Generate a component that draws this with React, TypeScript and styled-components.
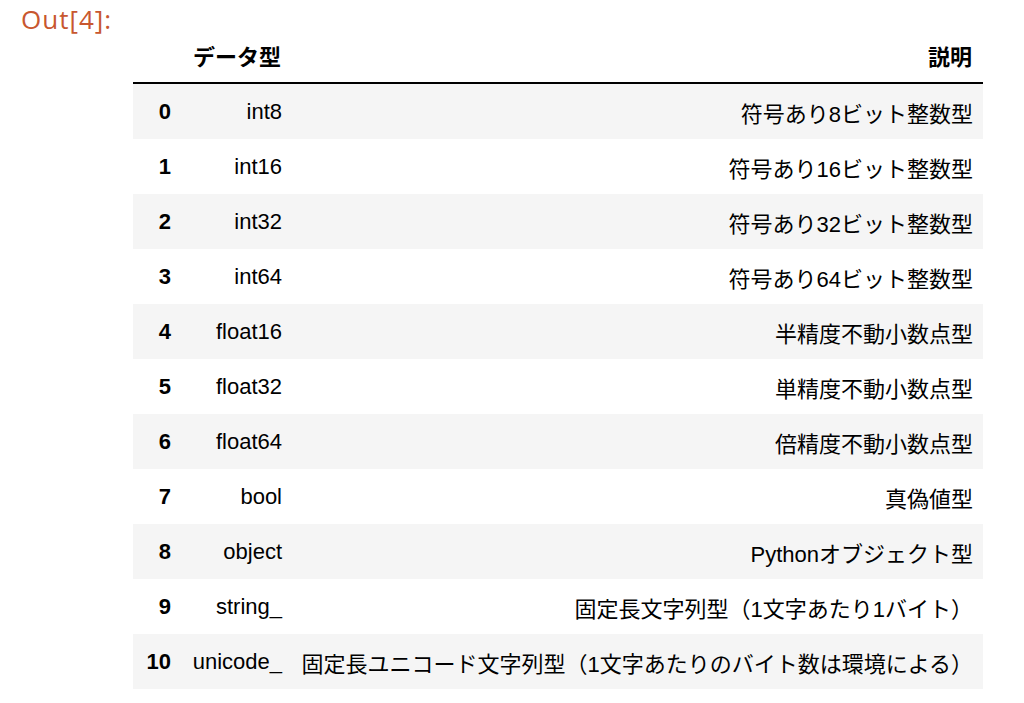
import styled, { createGlobalStyle } from "styled-components";

const GlobalStyle = createGlobalStyle`
  body {
    margin: 0;
    background: #ffffff;
    font-family: "Liberation Sans", "Noto Sans CJK JP", sans-serif;
    color: #000000;
  }
`;

const OutputCell = styled.div`
  display: flex;
  align-items: flex-start;
  padding-top: 2px;
`;

const Prompt = styled.div`
  width: 133px;
  box-sizing: border-box;
  padding-left: 21px;
  font-family: "Open Sans", "Liberation Sans", sans-serif;
  font-size: 26px;
  line-height: 34px;
  letter-spacing: 1px;
  color: #c8572f;
`;

const Table = styled.table`
  margin-top: 27px;
  width: 850px;
  table-layout: fixed;
  border-collapse: collapse;
  border-spacing: 0;
  font-size: 22px;
`;

const HeadCell = styled.th`
  height: 51px;
  padding: 0 11px 2px;
  text-align: right;
  vertical-align: middle;
  font-weight: bold;
  border-bottom: 2px solid #000000;
`;

const Row = styled.tr<{ $striped: boolean }>`
  background: ${(p) => (p.$striped ? "#f5f5f5" : "#ffffff")};
`;

const IndexCell = styled.th`
  height: 55px;
  padding: 0 11px 0 0;
  text-align: right;
  font-weight: bold;
  vertical-align: middle;
`;

const Cell = styled.td`
  height: 55px;
  padding: 0 10px 0 0;
  text-align: right;
  vertical-align: middle;
  white-space: nowrap;
`;

const rows: [string, string][] = [
  ["int8", "符号あり8ビット整数型"],
  ["int16", "符号あり16ビット整数型"],
  ["int32", "符号あり32ビット整数型"],
  ["int64", "符号あり64ビット整数型"],
  ["float16", "半精度不動小数点型"],
  ["float32", "単精度不動小数点型"],
  ["float64", "倍精度不動小数点型"],
  ["bool", "真偽値型"],
  ["object", "Pythonオブジェクト型"],
  ["string_", "固定長文字列型（1文字あたり1バイト）"],
  ["unicode_", "固定長ユニコード文字列型（1文字あたりのバイト数は環境による）"],
];

export default function App() {
  return (
    <>
      <GlobalStyle />
      <OutputCell>
        <Prompt>Out[4]:</Prompt>
        <Table>
          <colgroup>
            <col style={{ width: 49 }} />
            <col style={{ width: 110 }} />
            <col />
          </colgroup>
          <thead>
            <tr>
              <HeadCell />
              <HeadCell>データ型</HeadCell>
              <HeadCell>説明</HeadCell>
            </tr>
          </thead>
          <tbody>
            {rows.map(([dtype, desc], i) => (
              <Row key={dtype} $striped={i % 2 === 0}>
                <IndexCell>{i}</IndexCell>
                <Cell>{dtype}</Cell>
                <Cell>{desc}</Cell>
              </Row>
            ))}
          </tbody>
        </Table>
      </OutputCell>
    </>
  );
}
